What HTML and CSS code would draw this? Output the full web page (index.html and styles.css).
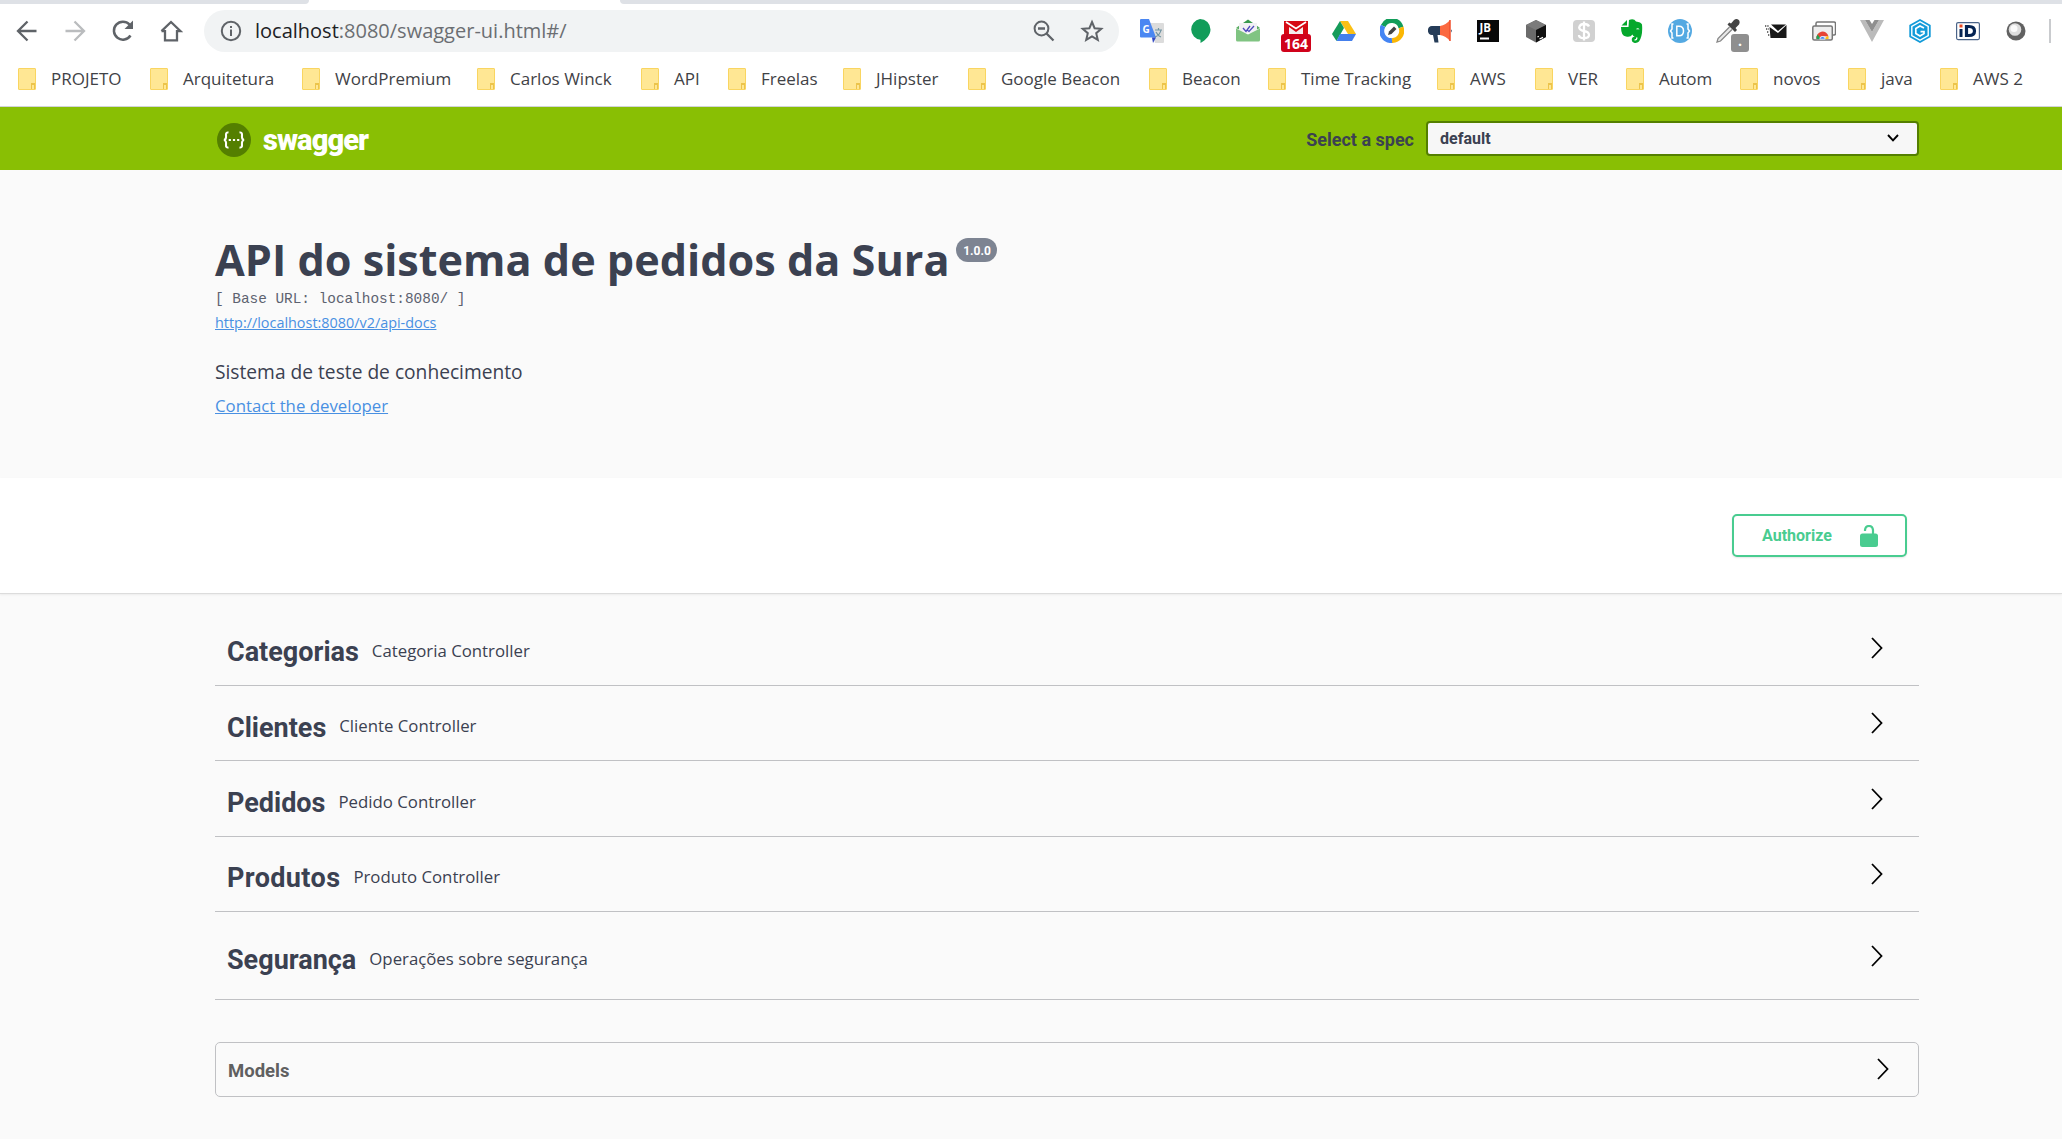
FILE: index.html
```html
<!DOCTYPE html>
<html lang="pt-BR">
<head>
<meta charset="utf-8">
<title>Swagger UI</title>
<link rel="stylesheet" href="styles.css">
</head>
<body>
<header class="browser">
  <div class="tabstrip"><div class="tab-left"></div><div class="tab-active"></div><div class="tab-right"></div></div>
  <div class="toolbar">
    <nav class="nav">
      <svg viewBox="0 0 24 24"><path d="M21.5 12H3.5M12.5 2.500L3 12l9.500 9.500" fill="none" stroke="#5f6368" stroke-width="2.300"/></svg>
      <svg viewBox="0 0 24 24"><path d="M2.500 12h18M11.500 2.500L21 12l-9.500 9.500" fill="none" stroke="#babcbe" stroke-width="2.300"/></svg>
      <svg viewBox="0 0 24 24"><path d="M19.500 16.500A9 9 0 1 1 18.500 5.500L20 7.500" fill="none" stroke="#5f6368" stroke-width="2.500"/><path d="M22 1.500V10h-8.500z" fill="#5f6368"/></svg>
      <svg viewBox="0 0 24 24"><path d="M6 11v10.300h12V11M2.500 12.200L12 3l9.500 9.200H18M2.500 12.200H6" fill="none" stroke="#5f6368" stroke-width="2.300"/></svg>
    </nav>
    <div class="address">
      <svg class="info" viewBox="0 0 24 24"><circle cx="12" cy="12" r="9.200" fill="none" stroke="#5f6368" stroke-width="2"/><path d="M12 10.500v6.500M12 7v2" stroke="#5f6368" stroke-width="2"/></svg>
      <span class="url"><b>localhost</b>:8080/swagger-ui.html#/</span>
      <svg class="tool" viewBox="0 0 24 24"><circle cx="9.500" cy="9.500" r="6.900" fill="none" stroke="#5f6368" stroke-width="2"/><path d="M6 9.500h7M14.500 14.500l7 7" stroke="#5f6368" stroke-width="2.300"/></svg>
      <svg class="tool star" viewBox="0 0 24 24"><path d="M12 3l2.600 6.200 6.700.600-5.100 4.400 1.600 6.600L12 17.300l-5.800 3.500 1.600-6.600-5.100-4.400 6.700-.600z" fill="none" stroke="#5f6368" stroke-width="2"/></svg>
    </div>
    <div class="extensions">
      <span class="ext"><svg viewBox="0 0 24 24"><path d="M9 4h14q1 0 1 1v18q0 1-1 1H15z" fill="#dcdcdc"/><path d="M1 0h8l7 18.500H1q-1 0-1-1V1q0-1 1-1z" fill="#4b87f2"/><path d="M12 18.500h4L13 24z" fill="#3249c4"/><path d="M15 11h7M18.500 9v2M21 11q-1 5-6 7M16 13q2 4 5 5" stroke="#7295a3" stroke-width="1.200" fill="none"/><text x="2.500" y="13.500" class="g-letter">G</text></svg></span>
      <span class="ext"><svg viewBox="0 0 24 24"><path d="M12 0a10.500 10.500 0 0 1 10.500 10.500C22.500 16 18 21 12.500 24v-3.200A10.500 10.500 0 0 1 12 0z" fill="#129d5a"/></svg></span>
      <span class="ext"><svg viewBox="0 0 24 24"><path d="M7 4l5-3.500L17 4z" fill="#37994d"/><path d="M0 9l4-3v5zM24 9l-4-3v5z" fill="#5aac62"/><path d="M3 4h18v10H3z" fill="#f1f1f4"/><path d="M0 9.500l12 6 12-6V21q0 1.500-1.500 1.500h-21Q0 22.500 0 21z" fill="#80c482"/><path d="M7 9l3 3.500 4-5.500M11 11l2 1.500L18 7" stroke="#4d49bd" stroke-width="1.300" fill="none"/></svg></span>
      <span class="ext"><svg viewBox="0 0 24 24"><path d="M0 2h24v13H0z" fill="#f5eeee"/><path d="M0 2h24v13h-5V8l-7 5-7-5v7H0z" fill="#d60a14"/><path d="M2 3l10 6.500L22 3" stroke="#fff" stroke-width="1.800" fill="none"/></svg><i class="badge count">164</i></span>
      <span class="ext"><svg viewBox="0 0 24 24"><path d="M8 2h8l8 13h-8z" fill="#fbc015"/><path d="M8 2l4 7L4.500 22 0 15z" fill="#159b59"/><path d="M8 15h16l-4 7H4.500z" fill="#447fec"/></svg></span>
      <span class="ext"><svg viewBox="0 0 24 24"><g fill="none" stroke-width="5"><path d="M3.200 7A9.500 9.500 0 0 1 21 8.500" stroke="#129d5a"/><path d="M21 8.500A9.500 9.500 0 0 1 12 21.500" stroke="#fbb704"/><path d="M12 21.500A9.500 9.500 0 0 1 3.200 7" stroke="#4384f3"/></g><path d="M8 16l1-3.500L14 7.500l2.500 2.500-5 5z" fill="#444"/></svg></span>
      <span class="ext"><svg viewBox="0 0 24 24"><path d="M12 7H4a4 4 0 0 0-4 4.500A4 4 0 0 0 4 16h1l1.500 7.500h4L9.500 16H12z" fill="#253c58"/><path d="M12 7Q18 6 22 1v21q-4-5-10-6z" fill="#fb6940"/><path d="M22 1v21" stroke="#f04f2c" stroke-width="1.500"/><path d="M23 10.500q1.500 1 0 3z" fill="#253c58"/></svg></span>
      <span class="ext"><svg viewBox="0 0 24 24"><path d="M1 1h22v22H1z" fill="#080808"/><path d="M4 19.500h9" stroke="#fff" stroke-width="2"/><text x="3.500" y="13" class="jb-letter">JB</text></svg></span>
      <span class="ext"><svg viewBox="0 0 24 24"><path d="M12 1l10 5v12l-10 5.500L2 18V6z" fill="#6b6b6b"/><path d="M12 1l10 5-10 5L2 6z" fill="#7b7b7b"/><path d="M12 11l10-5v12l-10 5.500z" fill="#101010"/><path d="M13.500 18l1.300-.700M15.500 20l3.500-1.700" stroke="#fff" stroke-width="1.300" fill="none"/></svg></span>
      <span class="ext"><svg viewBox="0 0 24 24"><rect x="1" y="1" width="22" height="22" rx="4" fill="#d1d1d1"/><path d="M17 7.500Q16 5 12 5T7.200 8.500Q7.200 11 12 12t5 3.800Q17 19.200 12 19.200T7 16M12 2.500v19" stroke="#fff" stroke-width="2.300" fill="none"/></svg></span>
      <span class="ext"><svg viewBox="0 0 24 24"><path d="M7 1v5.500H1.500zM9 1q5-1.800 7 1.500 5 .500 6 3 1 11-3 17-2 2-5 1.300-3-1-2-4.500 1-2 4-1.300v2q-2 0-1.500 1.500 3 .500 3-3-4 0-5-3-2 3-6.500 2Q1 17 1 8h7.500z" fill="#05a82c"/><path d="M16.500 9.500q2-1 3 1-1.500-.500-3 0z" fill="#fff"/></svg></span>
      <span class="ext"><svg viewBox="0 0 24 24"><circle cx="12" cy="12" r="12" fill="#54a9e2"/><path d="M8.800 7.200v9.600h2.200q4.500 0 4.500-4.800t-4.500-4.800zM5.500 5H4v5l-1.500 2L4 14v5h1.500M18.500 5H20v5l1.500 2-1.500 2v5h-1.500" fill="none" stroke="#fff" stroke-width="1.500"/></svg></span>
      <span class="ext"><svg viewBox="0 0 24 24"><path d="M13.500 8L2 19.500 1 23l3.500-1L16 10.500" fill="#e8e8e8" stroke="#888" stroke-width="1.300"/><path d="M11.500 5.500l7.500 7.500 2-2-1.500-2 3.500-3.500q1.500-3-.500-4.700t-4.500.2L15 4.500l-1.700-1z" fill="#444"/></svg><i class="badge dot">.</i></span>
      <span class="ext"><svg viewBox="0 0 24 24"><path d="M7 5.500h15l-8 6.500zM5.500 8l8.500 6 8.500-8v13H6.500z" fill="#181818"/><path d="M1 7h4M2 10h3M3 13h2M4 16h2" stroke="#444" stroke-width="1.500" stroke-dasharray="1.300 1"/></svg></span>
      <span class="ext"><svg viewBox="0 0 24 24"><rect x="4" y="3" width="19.500" height="13" rx="1.500" fill="#fff" stroke="#777" stroke-width="1.500"/><rect x=".8" y="7" width="19.500" height="14" rx="1.500" fill="#eee" stroke="#777" stroke-width="1.500"/><path d="M4.500 20a6 6 0 0 1 12-2.500L10 17z" fill="#e64435"/><path d="M4.500 20a6 6 0 0 1 1-4.500L9 20z" fill="#21a357"/><path d="M16 16.500q1 2 .5 3.500H12z" fill="#fbc116"/><path d="M7.800 20.200a2.700 2.700 0 0 1 5.400 0z" fill="#4487ee" stroke="#fff" stroke-width=".7"/></svg></span>
      <span class="ext"><svg viewBox="0 0 24 24"><path d="M0 1h5l7 12 7-12h5L12 23z" fill="#bbb"/><path d="M5 1h4.500l2.500 4 2.500-4H19l-7 12z" fill="#8f8f8f"/></svg></span>
      <span class="ext"><svg viewBox="0 0 24 24"><path d="M12 1l9.800 5.500v11L12 23l-9.800-5.500v-11z" fill="#fff" stroke="#139bd9" stroke-width="1.800"/><path d="M12 3.500l7.500 4.200v8.600L12 20.500l-7.500-4.200V7.700z" fill="#139bd9"/><path d="M16 9L12 7 7.800 9.500v5L12 17l4-2.400v-2h-3.500" stroke="#fff" stroke-width="1.700" fill="none"/></svg></span>
      <span class="ext"><svg viewBox="0 0 24 24"><rect x=".6" y="3.600" width="22.800" height="17" rx="1.500" fill="#fff" stroke="#4b6489" stroke-width="1.200"/><path d="M3.500 5.500h3v3h-3z" fill="#ea4a23"/><path d="M3.500 10h3v8h-3z" fill="#052453"/><path d="M10.500 7.500h2.500q5.500 0 5.500 4.500t-5.500 4.500h-2.500z" fill="none" stroke="#052453" stroke-width="3.200"/></svg></span>
      <span class="ext"><svg viewBox="0 0 24 24"><circle cx="12" cy="12" r="9.500" fill="#616161"/><circle cx="11" cy="10.500" r="6.300" fill="#ddd"/><circle cx="10" cy="9.500" r="3.500" fill="#fafafa"/></svg></span>
    </div>
    <div class="divider"></div>
  </div>
  <nav class="bookmarks">
    <a>PROJETO</a><a>Arquitetura</a><a>WordPremium</a><a>Carlos Winck</a><a>API</a><a>Freelas</a><a>JHipster</a><a>Google Beacon</a><a>Beacon</a><a>Time Tracking</a><a>AWS</a><a>VER</a><a>Autom</a><a>novos</a><a>java</a><a>AWS 2</a>
  </nav>
</header>
<div class="topbar">
  <div class="wrapper topbar-inner">
    <svg class="logo" viewBox="0 0 34 34"><circle cx="17" cy="17" r="17" fill="#547f00"/><path d="M11.500 9.500Q8.800 9 9 12q.500 4.500-2 5 2.500.500 2 5-.200 3 2.500 2.500M22.500 9.500Q25.200 9 25 12q-.500 4.500 2 5-2.500.500-2 5 .200 3-2.500 2.500" fill="none" stroke="#fff" stroke-width="2.100"/><path d="M11.700 17h2.200M15.900 17h2.200M20.100 17h2.200" stroke="#fff" stroke-width="2.200"/></svg>
    <span class="brand">swagger</span>
    <span class="spec-label">Select a spec</span>
    <div class="select"><span>default</span><svg viewBox="0 0 12 8"><path d="M1 1l5 5.300L11 1" fill="none" stroke="#000" stroke-width="1.900"/></svg></div>
  </div>
</div>
<section class="wrapper information">
  <h1><span>API do sistema de pedidos da Sura</span><sup>1.0.0</sup></h1>
  <p class="base">[ Base URL: localhost:8080/ ]</p>
  <a class="docs">http://localhost:8080/v2/api-docs</a>
  <p class="about">Sistema de teste de conhecimento</p>
  <a class="contact">Contact the developer</a>
</section>
<section class="scheme">
  <div class="wrapper scheme-inner">
    <button class="authorize"><span>Authorize</span><svg viewBox="0 0 18 22"><rect x="0" y="8.500" width="18" height="13.500" rx="2.500" fill="#49cc90"/><path d="M5 6V5q.500-4 4-4T13 5v5" fill="none" stroke="#49cc90" stroke-width="2.200"/></svg></button>
  </div>
</section>
<main class="wrapper">
  <div class="tag"><h2>Categorias</h2><small>Categoria Controller</small><svg class="arrow" viewBox="0 0 12 22"><path d="M1 1l9.500 10L1 21" fill="none" stroke="#000" stroke-width="1.800"/></svg></div>
  <div class="tag"><h2>Clientes</h2><small>Cliente Controller</small><svg class="arrow" viewBox="0 0 12 22"><path d="M1 1l9.500 10L1 21" fill="none" stroke="#000" stroke-width="1.800"/></svg></div>
  <div class="tag"><h2>Pedidos</h2><small>Pedido Controller</small><svg class="arrow" viewBox="0 0 12 22"><path d="M1 1l9.500 10L1 21" fill="none" stroke="#000" stroke-width="1.800"/></svg></div>
  <div class="tag"><h2 class="wide">Produtos</h2><small>Produto Controller</small><svg class="arrow" viewBox="0 0 12 22"><path d="M1 1l9.500 10L1 21" fill="none" stroke="#000" stroke-width="1.800"/></svg></div>
  <div class="tag tall"><h2>Segurança</h2><small>Operações sobre segurança</small><svg class="arrow" viewBox="0 0 12 22"><path d="M1 1l9.500 10L1 21" fill="none" stroke="#000" stroke-width="1.800"/></svg></div>
  <div class="models"><h3>Models</h3><svg class="arrow" viewBox="0 0 12 22"><path d="M1 1l9.500 10L1 21" fill="none" stroke="#000" stroke-width="1.800"/></svg></div>
</main>
</body>
</html>
```
FILE: styles.css
```css
*, *::before { box-sizing: border-box; }
body {
  margin: 0;
  min-height: 1139px;
  background: #fafafa;
  color: #3b4151;
  font-family: "Open Sans", "Noto Sans", sans-serif;
  overflow: hidden;
}
h1, h2, h3, p { margin: 0; }
svg { display: block; flex: none; }

.browser { height: 107px; background: #fff; border-bottom: 1px solid #d2d4d8; }
.tabstrip { display: flex; height: 4px; background: #fff; }
.tab-left { width: 309px; background: #dee1e6; border-bottom-right-radius: 6px; }
.tab-active { width: 311px; }
.tab-right { flex: 1; background: #dee1e6; border-bottom-left-radius: 6px; }
.toolbar { display: flex; height: 54px; align-items: center; }
.nav { display: flex; width: 204px; padding-left: 15px; gap: 24px; }
.nav svg { width: 24px; height: 24px; }
.address {
  display: flex;
  align-items: center;
  width: 915px;
  height: 42px;
  margin-right: 9px;
  padding: 0 15px;
  border-radius: 21px;
  background: #f1f3f4;
}
.info { width: 24px; height: 24px; }
.url { flex: 1; margin-left: 12px; font-size: 20px; line-height: 28px; color: #6b6e72; }
.url b { font-weight: 400; color: #202124; }
.tool { width: 24px; height: 24px; }
.star { margin-left: 24px; }
.extensions { display: flex; }
.ext { position: relative; width: 48px; height: 24px; padding-left: 12px; }
.ext svg { width: 24px; height: 24px; }
.g-letter { font: 700 10px "Open Sans", sans-serif; fill: #fff; }
.jb-letter { font: 700 11.500px "Open Sans", sans-serif; fill: #fff; }
.badge {
  position: absolute;
  top: 15px;
  height: 18px;
  border-radius: 3px;
  color: #fff;
  font: 700 14px/19px "Open Sans", sans-serif;
  text-align: center;
}
.count { left: 9px; width: 30px; background: #d0021b; }
.dot { left: 27px; width: 18px; background: #8f8f8f; line-height: 14px; }
.divider { width: 2px; height: 24px; margin-left: 9px; background: #c9cbce; }
.bookmarks {
  display: grid;
  grid-template-columns: 132px 152px 175px 164px 87px 115px 125px 181px 119px 169px 98px 91px 114px 108px 92px 100px;
  height: 42px;
  padding-left: 18px;
  align-items: center;
  font-size: 17px;
  line-height: 24px;
  color: #3f4246;
  white-space: nowrap;
}
.bookmarks a { display: flex; align-items: center; gap: 15px; }
.bookmarks a::before {
  content: "";
  width: 18px;
  height: 22px;
  border: 1px solid #f9d561;
  border-radius: 1px;
  background: linear-gradient(#ffe794, #ffe794) 13px 16px / 2px 4px no-repeat, linear-gradient(#ecc44c, #ecc44c) 12px 14px / 4px 6px no-repeat, #ffe794;
}

.wrapper { width: 1704px; margin-left: 215px; }
.topbar { height: 63px; background: #89bf04; }
.topbar-inner { display: flex; height: 63px; align-items: center; }
.logo { width: 34px; height: 34px; margin: 3px 0 0 2px; }
.brand, .spec-label, .select, .authorize, h2, h3, sup { font-family: Roboto, "Open Sans", sans-serif; font-weight: 700; }
.brand { flex: 1; margin: 2px 0 0 12px; font-size: 29px; font-weight: 900; letter-spacing: -.900px; color: #fff; line-height: 36px; }
.spec-label { margin-top: 2px; font-size: 18px; line-height: 24px; }
.select {
  display: flex;
  align-items: center;
  justify-content: space-between;
  width: 493px;
  height: 35px;
  margin: -1px 0 0 12px;
  padding: 0 18px 0 12px;
  border: 2px solid #547f00;
  border-radius: 4px;
  background: #f7f7f7;
  font-size: 16px;
}
.select svg { width: 12px; height: 8px; }

.information { height: 308px; padding-top: 60px; }
h1 { display: flex; font-size: 43.200px; line-height: 60px; font-weight: 700; white-space: nowrap; }
sup {
  width: 41px;
  height: 24px;
  margin: 8px 0 0 7px;
  border-radius: 12px;
  background: #7d8492;
  color: #fff;
  font-size: 12px;
  line-height: 26px;
  text-align: center;
}
.base { font: 14.400px/20px "Liberation Mono", monospace; margin-top: -1px; color: #5d6270; }
.docs, .contact { display: block; color: #4990e2; text-decoration: underline; }
.docs { margin-top: 1px; font-size: 14.400px; line-height: 26px; }
.about { margin-top: 21px; font-size: 19.200px; line-height: 30px; }
.contact { margin-top: 4px; font-size: 16.800px; line-height: 30px; }

.scheme { height: 116px; background: #fff; border-bottom: 1px solid #dcdcdc; box-shadow: 0 1px 2px rgba(0, 0, 0, .06); }
.scheme-inner { display: flex; justify-content: flex-end; padding: 36px 12px 0 0; }
.authorize {
  display: flex;
  align-items: center;
  justify-content: space-between;
  width: 175px;
  height: 43px;
  padding: 0 27px 0 28px;
  border: 2px solid #49cc90;
  border-radius: 5px;
  background: #fff;
  box-shadow: 0 1px 2px rgba(0, 0, 0, .1);
  color: #49cc90;
  font-size: 16px;
}
.authorize svg { width: 18px; height: 22px; }

main { padding-top: 16.600px; }
.tag {
  display: flex;
  align-items: center;
  height: 75.400px;
  padding: 0 36px 0 12px;
  border-bottom: 1px solid #c0c1c4;
}
.tall { height: 88px; }
h2 { font-size: 27px; line-height: 36px; margin-top: 9px; }
.wide { letter-spacing: .380px; }
small { flex: 1; margin-left: 13px; margin-top: 6px; font-size: 16.800px; line-height: 24px; }
.arrow { width: 12px; height: 22px; }
.models {
  display: flex;
  align-items: center;
  justify-content: space-between;
  height: 55px;
  margin-top: 42px;
  padding: 0 29px 0 12px;
  border: 1px solid #c0c1c4;
  border-radius: 5px;
}
h3 { font-size: 18.500px; line-height: 24px; margin-top: 2px; color: #606060; }
.models .arrow { margin-top: -1px; }
```
